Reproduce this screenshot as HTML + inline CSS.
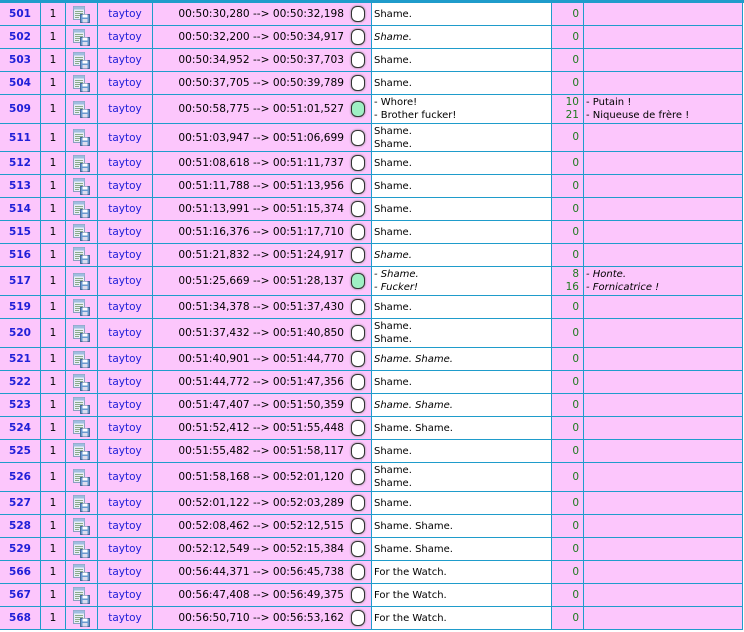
<!DOCTYPE html>
<html><head><meta charset="utf-8"><style>
body{margin:0;width:744px;height:632px;background:#fff;overflow:hidden;font-family:"DejaVu Sans","Liberation Sans",sans-serif;font-size:10px;color:#000}
#top{position:absolute;left:0;top:0;width:744px;height:3px;background:#1f9ccb}
.r{position:absolute;left:0;width:743px;border-bottom:1px solid #1f9ccb;box-sizing:border-box;background:#fcc6fc}
.c{position:absolute;top:0;bottom:0;border-left:1px solid #1f9ccb;box-sizing:border-box;display:flex;align-items:center}
.id{left:0;width:40px;justify-content:center;color:#2020d8;font-weight:bold;font-size:10.5px;border-left:none}
.one{left:40px;width:25px;justify-content:center;font-size:10.5px}
.ic{left:65px;width:32px;justify-content:center}
.us{left:97px;width:55px;justify-content:center;color:#2020d8;font-size:10.5px}
.tm{left:152px;width:219px;justify-content:flex-end;padding-right:27px;font-size:10.6px}
.tx{left:371px;width:180px;background:#fff;padding-left:2px;line-height:13px}
.n{left:551px;width:32px;justify-content:flex-end;padding-right:4px;color:#1e7a1e;line-height:13px;text-align:right;font-size:10.5px}
.tr{left:583px;width:160px;padding-left:2px;line-height:13px;border-right:1px solid #1f9ccb}
.ci{position:absolute;left:351px;width:14px;height:16px;border:1.5px solid #333;border-radius:6px;background:#fff;box-shadow:0 0 2px #777;box-sizing:border-box}
.g{background:#9ff0c4}
i{font-style:italic}
</style></head><body><div id="top"></div>
<div id="rows"></div>
<script>
var d=[
[501,23,"Shame.",0],[502,23,"<i>Shame.</i>",0],[503,23,"Shame.",0],[504,23,"Shame.",0],
[509,29,"- Whore!<br>- Brother fucker!","10<br>21","- Putain !<br>- Niqueuse de frère !",1],
[511,28,"Shame.<br>Shame.",0],[512,23,"Shame.",0],[513,23,"Shame.",0],[514,23,"Shame.",0],[515,23,"Shame.",0],
[516,23,"<i>Shame.</i>",0],
[517,29,"<i>- Shame.<br>- Fucker!</i>","8<br>16","<i>- Honte.<br>- Fornicatrice !</i>",1],
[519,23,"Shame.",0],[520,29,"Shame.<br>Shame.",0],[521,23,"<i>Shame. Shame.</i>",0],[522,23,"Shame.",0],
[523,23,"<i>Shame. Shame.</i>",0],[524,23,"Shame. Shame.",0],[525,23,"Shame.",0],[526,29,"Shame.<br>Shame.",0],
[527,23,"Shame.",0],[528,23,"Shame. Shame.",0],[529,23,"Shame. Shame.",0],
[566,23,"For the Watch.",0],[567,23,"For the Watch.",0],[568,23,"For the Watch.",0]];
var t=["00:50:30,280 --> 00:50:32,198","00:50:32,200 --> 00:50:34,917","00:50:34,952 --> 00:50:37,703","00:50:37,705 --> 00:50:39,789","00:50:58,775 --> 00:51:01,527","00:51:03,947 --> 00:51:06,699","00:51:08,618 --> 00:51:11,737","00:51:11,788 --> 00:51:13,956","00:51:13,991 --> 00:51:15,374","00:51:16,376 --> 00:51:17,710","00:51:21,832 --> 00:51:24,917","00:51:25,669 --> 00:51:28,137","00:51:34,378 --> 00:51:37,430","00:51:37,432 --> 00:51:40,850","00:51:40,901 --> 00:51:44,770","00:51:44,772 --> 00:51:47,356","00:51:47,407 --> 00:51:50,359","00:51:52,412 --> 00:51:55,448","00:51:55,482 --> 00:51:58,117","00:51:58,168 --> 00:52:01,120","00:52:01,122 --> 00:52:03,289","00:52:08,462 --> 00:52:12,515","00:52:12,549 --> 00:52:15,384","00:56:44,371 --> 00:56:45,738","00:56:47,408 --> 00:56:49,375","00:56:50,710 --> 00:56:53,162"];
var ic='<svg width="17" height="17" viewBox="0 0 17 17"><rect x="0.5" y="0.5" width="11" height="13" fill="#e8eef8" stroke="#8a9fc0"/><rect x="0.5" y="0.5" width="11" height="3" fill="#9fbde0"/><path d="M2 5.5h8M2 7.5h8M2 9.5h8M2 11.5h4" stroke="#8aaa8a"/><rect x="7.5" y="8.5" width="9" height="8" fill="#6a9ad0" stroke="#4a6a9a"/><rect x="9.5" y="8.5" width="5" height="3" fill="#fff"/><rect x="9.5" y="13" width="5" height="3.5" fill="#dde"/></svg>';
var y=3,h="";
d.forEach(function(r,i){
var ht=r[1];
h+='<div class="r" style="top:'+y+'px;height:'+ht+'px">'+
'<div class="c id">'+r[0]+'</div><div class="c one">1</div><div class="c ic">'+ic+'</div><div class="c us">taytoy</div>'+
'<div class="c tm">'+t[i]+'</div><div class="ci'+(r[5]?' g':'')+'" style="top:'+((ht-1-16)/2)+'px"></div>'+
'<div class="c tx"><div>'+r[2]+'</div></div><div class="c n"><div>'+r[3]+'</div></div><div class="c tr"><div>'+(r[4]||'')+'</div></div></div>';
y+=ht;});
document.getElementById('rows').innerHTML=h;
</script></body></html>
